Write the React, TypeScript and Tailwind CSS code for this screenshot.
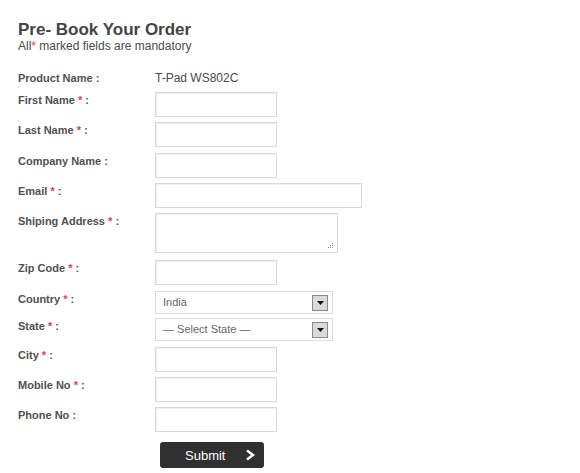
import React from "react";

const Star = () => <span className="text-[#e04040]">*</span>;

function Label({ text, req }: { text: string; req?: boolean }) {
  return (
    <div className="w-[137px] shrink-0 pt-[2px] text-[11px] leading-[13px] font-bold text-[#505050]">
      {text}
      {req ? (
        <>
          {" "}
          <Star /> :
        </>
      ) : (
        " :"
      )}
    </div>
  );
}

function TextInput({ w }: { w: string }) {
  return <div className={`${w} h-[25px] border border-[#d9d9d9] bg-white shadow-[inset_1px_1px_0_#efefef]`} />;
}

function SelectBox({ value, h }: { value: string; h: string }) {
  return (
    <div className={`w-[178px] ${h} border border-[#dcdcdc] bg-white flex items-center justify-between pl-[7px] pr-[4px]`}>
      <span className="text-[11px] text-[#666]">{value}</span>
      <span className="w-[16px] h-[16px] border border-[#8a8a8a] bg-[#dadada] flex items-center justify-center">
        <svg width="7" height="4" viewBox="0 0 7 4">
          <polygon points="0,0 7,0 3.5,4" fill="#111" />
        </svg>
      </span>
    </div>
  );
}

export default function App() {
  return (
    <div
      className="w-[580px] h-[473px] bg-white px-[18px] pt-[20px] text-[#444] overflow-hidden"
      style={{ fontFamily: '"Liberation Sans", Arial, sans-serif' }}
    >
      <h1 className="text-[17px] leading-[20px] font-bold text-[#444]">Pre- Book Your Order</h1>
      <p className="text-[12px] leading-[13px] text-[#4a4a4a]">
        All<Star /> marked fields are mandatory
      </p>

      <div className="flex flex-col">
        <div className="flex items-baseline mt-[19px]">
          <div className="w-[137px] shrink-0 text-[11px] leading-[13px] font-bold text-[#505050]">Product Name :</div>
          <div className="text-[12px] leading-[13px] text-[#4a4a4a]">T-Pad WS802C</div>
        </div>

        <div className="flex mt-[7px]">
          <Label text="First Name" req />
          <TextInput w="w-[122px]" />
        </div>
        <div className="flex mt-[5px]">
          <Label text="Last Name" req />
          <TextInput w="w-[122px]" />
        </div>
        <div className="flex mt-[6px]">
          <Label text="Company Name" />
          <TextInput w="w-[122px]" />
        </div>
        <div className="flex mt-[5px]">
          <Label text="Email" req />
          <TextInput w="w-[207px]" />
        </div>
        <div className="flex mt-[5px]">
          <Label text="Shiping Address" req />
          <div className="relative w-[183px] h-[40px] border border-[#d9d9d9] bg-white shadow-[inset_1px_1px_0_#efefef]">
            <svg className="absolute right-[3px] bottom-[3px]" width="7" height="7" viewBox="0 0 7 7">
              <rect x="5" y="1" width="1" height="1" fill="#999" />
              <rect x="3" y="3" width="1" height="1" fill="#999" />
              <rect x="5" y="3" width="1" height="1" fill="#999" />
              <rect x="1" y="5" width="1" height="1" fill="#999" />
              <rect x="3" y="5" width="1" height="1" fill="#999" />
              <rect x="5" y="5" width="1" height="1" fill="#999" />
            </svg>
          </div>
        </div>
        <div className="flex mt-[7px]">
          <Label text="Zip Code" req />
          <TextInput w="w-[122px]" />
        </div>
        <div className="flex mt-[6px]">
          <Label text="Country" req />
          <SelectBox value="India" h="h-[23px]" />
        </div>
        <div className="flex mt-[4px]">
          <Label text="State" req />
          <SelectBox value="— Select State —" h="h-[23px]" />
        </div>
        <div className="flex mt-[6px]">
          <Label text="City" req />
          <TextInput w="w-[122px]" />
        </div>
        <div className="flex mt-[5px]">
          <Label text="Mobile No" req />
          <TextInput w="w-[122px]" />
        </div>
        <div className="flex mt-[5px]">
          <Label text="Phone No" />
          <TextInput w="w-[122px]" />
        </div>
        <div className="flex mt-[10px] pl-[142px]">
          <button className="w-[104px] h-[26px] rounded-[3px] bg-[#303030] text-white flex items-center justify-between pl-[25px] pr-[9px]">
            <span className="text-[13px] leading-none">Submit</span>
            <svg width="10" height="12" viewBox="0 0 10 12">
              <polyline points="2,1.5 8,6 2,10.5" fill="none" stroke="#fff" strokeWidth="2.4" strokeLinejoin="miter" />
            </svg>
          </button>
        </div>
      </div>
    </div>
  );
}
